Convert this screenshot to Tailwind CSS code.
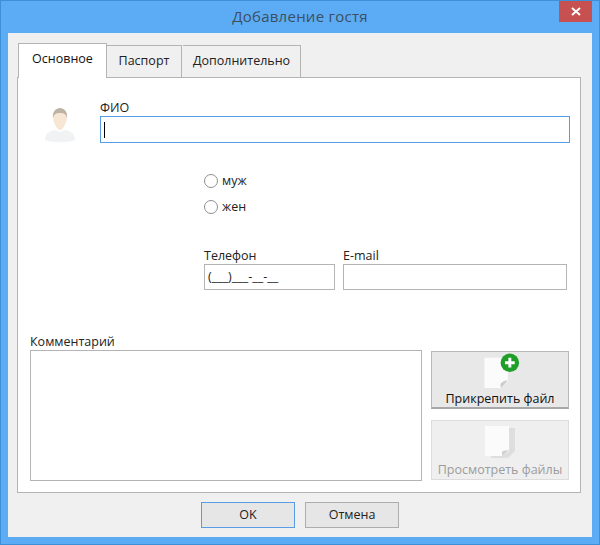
<!DOCTYPE html>
<html lang="en">
<head>
    <meta charset="UTF-8">
    <title>Добавление гостя</title>
    <script src="https://cdn.jsdelivr.net/npm/@tailwindcss/browser@4"></script>
</head>
<body class="w-[600px] h-[545px] overflow-hidden font-['Open_Sans','Noto_Sans',sans-serif] text-[12.5px] text-[#222]">
    <!-- Window frame -->
    <div class="w-[600px] h-[545px] bg-[#5cabf5] border border-[#3d8fd8] flex flex-col">
        <!-- Title bar -->
        <div class="relative h-[32px] shrink-0 flex items-center justify-center">
            <span class="text-[15px] text-[#3d4f60] tracking-[0.25px] mt-[-1px]">Добавление гостя</span>
            <div class="absolute right-[7px] top-0 w-[33px] h-[21px] bg-[#c75050] flex items-center justify-center">
                <svg width="10" height="9" viewBox="0 0 10 9"><path d="M1 1l8 7M9 1l-8 7" stroke="#fff" stroke-width="2"/></svg>
            </div>
        </div>

        <!-- Client area -->
        <div class="mx-[7px] w-[584px] h-[504px] bg-[#f0f0f0] pl-[9px] pt-[10px]">
            <!-- Tabs -->
            <div class="flex items-end h-[35px] pl-[1px] relative z-10">
                <div class="w-[89px] h-[35px] bg-white border border-b-0 border-[#b4b4b4] flex items-center justify-center pb-[3px] text-[#111]">Основное</div>
                <div class="w-[75px] h-[33px] bg-[#f0f0f0] border border-l-0 border-[#b4b4b4] flex items-center justify-center">Паспорт</div>
                <div class="w-[118px] h-[33px] bg-[#f0f0f0] border border-l-0 border-[#b4b4b4] ml-[1px] flex items-center justify-center">Дополнительно</div>
            </div>

            <!-- Tab panel -->
            <div class="w-[564px] h-[416px] mt-[-1px] bg-white border border-[#b4b4b4]">
                <div class="flex h-[66px]">
                    <div class="w-[82px] shrink-0 flex justify-center pl-[2px] pt-[29px]">
                        <svg width="34" height="36" viewBox="0 0 34 36">
                            <path d="M2 33c0-6 4-9 10-10l5 2 5-2c6 1 10 4 10 10-5 3-25 3-30 0z" fill="#f0f2f4"/>
                            <path d="M10 10c0-5 3-8 7-8s7 3 7 8-4 13-7 13-7-8-7-13z" fill="#f7e6d4"/>
                            <path d="M10 11c-1-6 3-10 7-10s8 4 7 10c-1-4-3-5-7-5s-6 1-7 5z" fill="#bdb3a4"/>
                        </svg>
                    </div>
                    <div class="pt-[21px]">
                        <div class="h-[17px] leading-[17px]">ФИО</div>
                        <div class="w-[470px] h-[27px] border border-[#569de5] flex items-center pl-[3px]">
                            <div class="w-px h-[16px] bg-black"></div>
                        </div>
                    </div>
                </div>

                <!-- Gender and contacts -->
                <div class="ml-[186px] pt-[30px]">
                    <div class="flex items-center h-[14px] gap-[4px]">
                        <div class="w-[14px] h-[14px] rounded-full border border-[#8f8f8f]"></div>
                        <span>муж</span>
                    </div>
                    <div class="flex items-center h-[14px] gap-[4px] mt-[12px]">
                        <div class="w-[14px] h-[14px] rounded-full border border-[#8f8f8f]"></div>
                        <span>жен</span>
                    </div>
                    <div class="flex gap-[8px] mt-[33px]">
                        <div>
                            <div class="h-[17px] leading-[17px]">Телефон</div>
                            <div class="w-[131px] h-[26px] border border-[#b4b4b4] flex items-center pl-[3px] text-[#222]">(___)___-__-__</div>
                        </div>
                        <div>
                            <div class="h-[17px] leading-[17px]">E-mail</div>
                            <div class="w-[224px] h-[26px] border border-[#b4b4b4]"></div>
                        </div>
                    </div>
                </div>

                <!-- Comment and attachments -->
                <div class="flex ml-[12px] mt-[43px]">
                    <div>
                        <div class="h-[17px] leading-[17px]">Комментарий</div>
                        <div class="w-[392px] h-[131px] border border-[#b4b4b4]"></div>
                    </div>
                    <div class="ml-[9px] mt-[18px] flex flex-col gap-[11px]">
                        <div class="w-[138px] h-[58px] bg-[#e8e8e8] border border-[#b8b8b8] border-b-2 border-b-[#a8a8a8] flex flex-col items-center text-[#111]">
                            <svg class="ml-[8px]" width="48" height="38" viewBox="0 0 48 38">
                                <path d="M4 6h24v24l-7 7H4z" fill="#fbfbfb"/>
                                <path d="M28 29l-7 8c-1-3-1-5 1-6s4-2 6-2z" fill="#cbcdca"/>
                                <circle cx="30" cy="11" r="9.5" fill="#1f9e28"/>
                                <path d="M30 6v10M25 11h10" stroke="#fff" stroke-width="3"/>
                            </svg>
                            <span class="mt-[2px] leading-[16px]">Прикрепить файл</span>
                        </div>
                        <div class="w-[138px] h-[60px] bg-[#efefef] border border-[#dcdcdc] flex flex-col items-center text-[#9c9c9c]">
                            <svg class="mt-[4px]" width="34" height="34" viewBox="0 0 34 34">
                                <path d="M8 3h24v23l-7 7H8z" fill="#dedede"/>
                                <path d="M2 1h24v25l-7 5H2z" fill="#fbfbfb"/>
                                <path d="M26 25l-7 6c0-3 0-5 1-5s4-1 6-1z" fill="#cfcfcf"/>
                            </svg>
                            <span class="mt-[3px] leading-[16px]">Просмотреть файлы</span>
                        </div>
                    </div>
                </div>
            </div>

            <!-- Dialog buttons -->
            <div class="flex gap-[10px] ml-[184px] mt-[9px]">
                <div class="w-[94px] h-[26px] bg-[#e6e6e6] border border-[#569de5] flex items-center justify-center">OK</div>
                <div class="w-[94px] h-[26px] bg-[#e6e6e6] border border-[#adadad] flex items-center justify-center">Отмена</div>
            </div>
        </div>
    </div>
</body>
</html>
